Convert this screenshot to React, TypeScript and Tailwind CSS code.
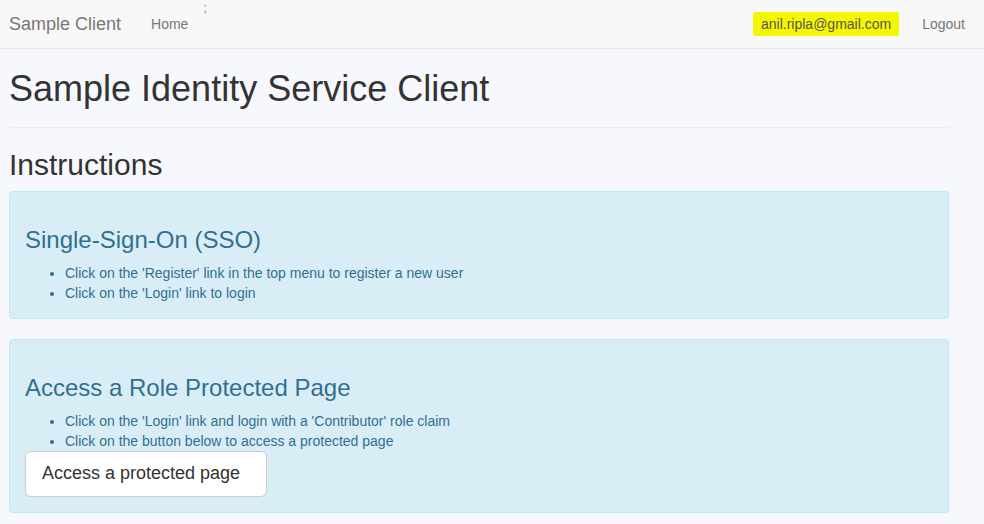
export default function App() {
  return (
    <div className="min-h-[524px] bg-[#f7f8fd] text-[14px] text-[#333] font-['Liberation_Sans',Arial,sans-serif]">
      {/* navbar */}
      <nav className="flex h-[49px] items-center border-b border-[#e7e7e7] bg-[#f8f8f8] pl-[9px] pr-[19px]">
        <a className="text-[18px] leading-5 text-[#777]">Sample Client</a>
        <a className="ml-[30px] leading-5 text-[#777]">Home</a>
        <span className="ml-[15px] self-start pt-[2px] text-[12px] leading-3 text-[#c8602a]">;</span>
        <div className="ml-auto flex items-center">
          <span className="ml-[4px] rounded-[3px] bg-[#f6f600] px-2 py-[2px] leading-5 text-[#555]">anil.ripla@gmail.com</span>
          <a className="ml-[23px] leading-5 text-[#777]">Logout</a>
        </div>
      </nav>

      <main className="w-[949px] pl-[9px]">
        <h1 className="mt-[20px] mb-[10px] text-[36px] leading-[1.1] font-normal">Sample Identity Service Client</h1>
        <hr className="mt-[18px] mb-[20px] border-t border-[#eee]" />
        <h2 className="mb-[10px] text-[30px] leading-[1.1] font-normal">Instructions</h2>

        <section className="mb-[20px] rounded border border-[#bce8f1] bg-[#d9edf7] p-[15px] text-[#31708f]">
          <h3 className="mt-[20px] mb-[10px] text-[24px] leading-[1.1] font-normal">Single-Sign-On (SSO)</h3>
          <ul className="list-disc pl-[40px] leading-5">
            <li>Click on the 'Register' link in the top menu to register a new user</li>
            <li>Click on the 'Login' link to login</li>
          </ul>
        </section>

        <section className="rounded border border-[#bce8f1] bg-[#d9edf7] p-[15px] text-[#31708f]">
          <h3 className="mt-[20px] mb-[10px] text-[24px] leading-[1.1] font-normal">Access a Role Protected Page</h3>
          <ul className="list-disc pl-[40px] leading-5">
            <li>Click on the 'Login' link and login with a 'Contributor' role claim</li>
            <li>Click on the button below to access a protected page</li>
          </ul>
          <button className="w-[242px] rounded-md border border-[#ccc] bg-white px-4 py-[10px] text-left text-[18px] leading-[1.3333] text-[#333]">
            Access a protected page
          </button>
        </section>
      </main>
    </div>
  );
}
